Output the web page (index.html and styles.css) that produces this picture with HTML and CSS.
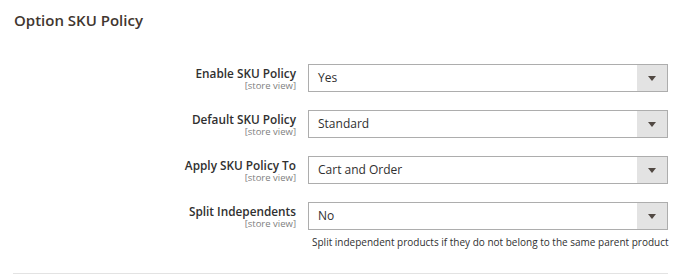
FILE: index.html
```html
<!DOCTYPE html>
<html>
<head>
<meta charset="utf-8">
<link rel="stylesheet" href="styles.css">
</head>
<body>
<div class="section">
  <h2 class="title">Option SKU Policy</h2>
  <div class="fields">
    <div class="row">
      <div class="label"><span class="name">Enable SKU Policy</span><span class="scope">[store view]</span></div>
      <div class="control"><div class="select"><span class="value">Yes</span><span class="arrow"></span></div></div>
    </div>
    <div class="row">
      <div class="label"><span class="name">Default SKU Policy</span><span class="scope">[store view]</span></div>
      <div class="control"><div class="select"><span class="value">Standard</span><span class="arrow"></span></div></div>
    </div>
    <div class="row">
      <div class="label"><span class="name">Apply SKU Policy To</span><span class="scope">[store view]</span></div>
      <div class="control"><div class="select"><span class="value">Cart and Order</span><span class="arrow"></span></div></div>
    </div>
    <div class="row">
      <div class="label"><span class="name">Split Independents</span><span class="scope">[store view]</span></div>
      <div class="control"><div class="select"><span class="value">No</span><span class="arrow"></span></div>
        <p class="note">Split independent products if they do not belong to the same parent product</p></div>
    </div>
  </div>
</div>
</body>
</html>
```
FILE: styles.css
```css
html, body {
  margin: 0;
  padding: 0;
  background: #ffffff;
}
body {
  font-family: "Open Sans", "Liberation Sans", sans-serif;
  color: #303030;
}
.section {
  margin: 0 17px 0 13px;
  padding-top: 10px;
  border-bottom: 1px solid #e3e3e3;
  height: 263px;
}
.title {
  margin: 0 0 0 1px;
  font-size: 15px;
  font-weight: 600;
  line-height: 20px;
  color: #41362f;
}
.fields {
  margin-top: 34px;
  display: flex;
  flex-direction: column;
  gap: 18px;
}
.row {
  display: flex;
  align-items: flex-start;
}
.label {
  width: 283px;
  display: flex;
  flex-direction: column;
  align-items: flex-end;
  padding-top: 2px;
}
.name {
  font-size: 11.8px;
  font-weight: 600;
  line-height: 14px;
  color: #303030;
}
.scope {
  font-size: 9.5px;
  line-height: 10px;
  margin-top: 1px;
  color: #808080;
}
.control {
  margin-left: 12px;
  width: 360px;
}
.select {
  box-sizing: border-box;
  height: 28px;
  border: 1px solid #adadad;
  display: flex;
  align-items: stretch;
  background: #fff;
}
.value {
  flex: 1;
  font-size: 12px;
  line-height: 26px;
  padding-left: 9px;
  color: #303030;
}
.arrow {
  width: 30px;
  background: #e3e3e3;
  position: relative;
}
.arrow::after {
  content: "";
  position: absolute;
  left: 11px;
  top: 11px;
  border-left: 4px solid transparent;
  border-right: 4px solid transparent;
  border-top: 5px solid #514943;
}
.note {
  margin: 5px 0 0 4px;
  font-size: 10px;
  line-height: 14px;
  white-space: nowrap;
  color: #303030;
}
```
